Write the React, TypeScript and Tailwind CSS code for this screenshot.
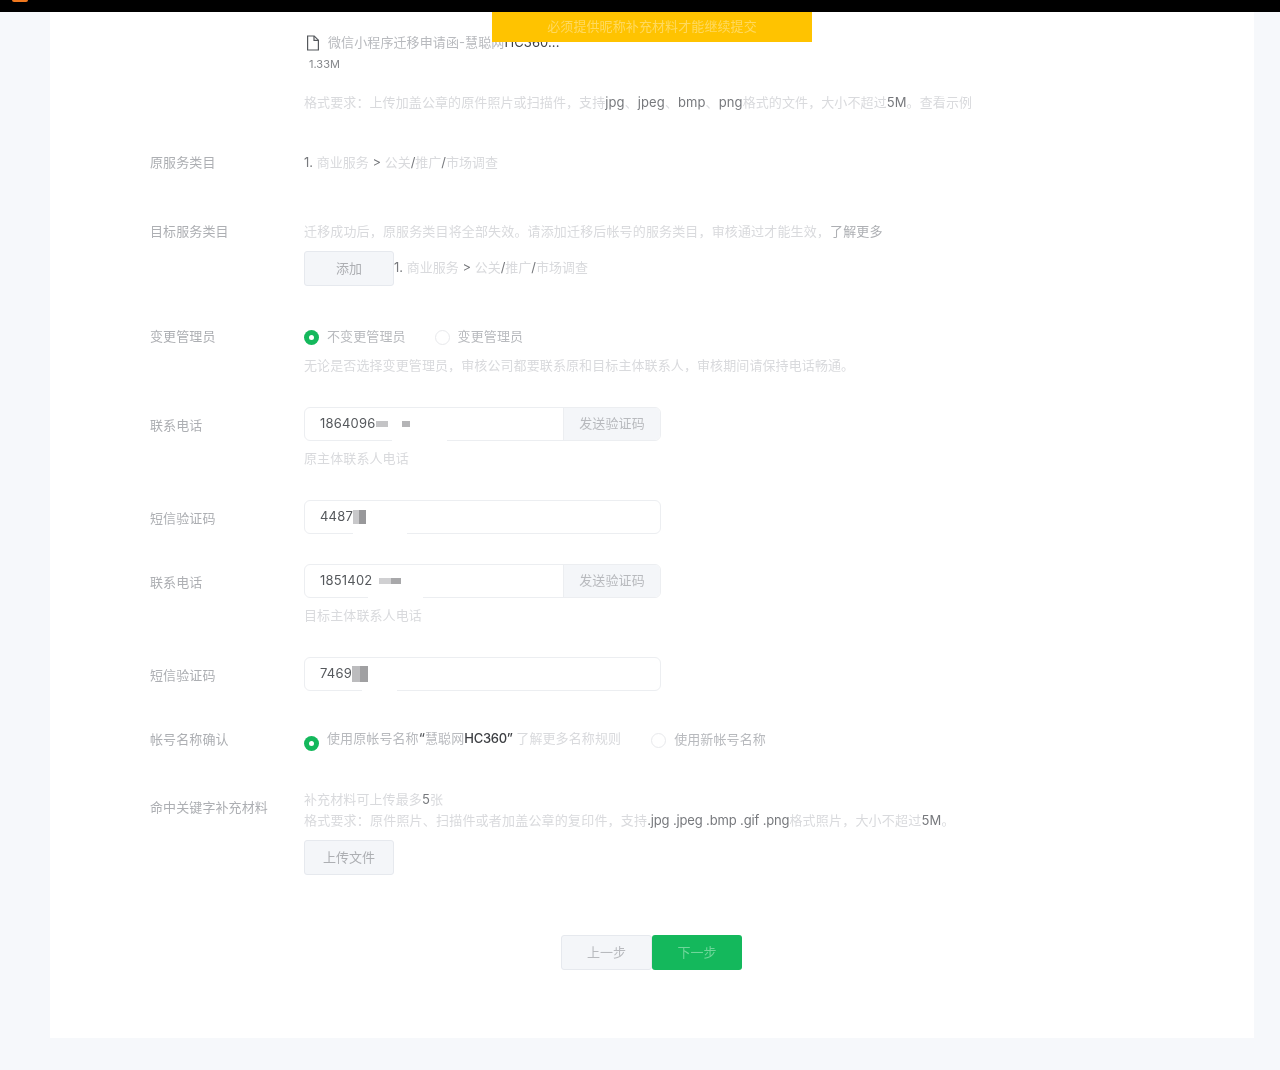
const font = { fontFamily: '"Inter","Noto Sans CJK SC",sans-serif' };

function Row({ label, className, labelClass, children }: { label: string; className: string; labelClass?: string; children: React.ReactNode }) {
  return (
    <div className={`flex ${className}`}>
      <div className={`w-[154px] shrink-0 text-[13px] leading-5 tracking-[0.1px] text-[#adafb3] ${labelClass ?? ""}`}>{label}</div>
      <div className="flex-1 min-w-0">{children}</div>
    </div>
  );
}

function Radio({ on }: { on?: boolean }) {
  return on ? (
    <span className="flex h-[15px] w-[15px] shrink-0 items-center justify-center rounded-full bg-[#14b85c]">
      <span className="h-[5px] w-[5px] rounded-full bg-white" />
    </span>
  ) : (
    <span className="block h-[15px] w-[15px] shrink-0 rounded-full border border-[#e8e9ec] bg-white" />
  );
}

function Mosaic({ cells }: { cells: string[] }) {
  return (
    <span className="inline-flex items-center">
      {cells.map((c, i) => (
        <span key={i} className={c} />
      ))}
    </span>
  );
}

function Field({ value, mosaic, send, patch }: { value: string; mosaic: React.ReactNode; send?: boolean; patch: string }) {
  return (
    <div className="relative w-[357px]">
      <div className="flex h-[34px] overflow-hidden rounded-[6px] border border-[#eceef1] bg-white">
        <div className="flex flex-1 items-center pl-[15px] text-[13px] tracking-[0.2px] text-[#55585c]">
          {value}
          {mosaic}
        </div>
        {send && (
          <div className="flex w-[97px] items-center justify-center border-l border-[#eceef1] bg-[#f4f6f9] text-[13px] tracking-[0.1px] text-[#b8babe]">
            发送验证码
          </div>
        )}
      </div>
      <div className={`absolute bottom-0 h-[2px] bg-white ${patch}`} />
    </div>
  );
}

const dark = "text-[#77797d]";

export default function App() {
  return (
    <div style={font} className="relative h-[1070px] overflow-hidden bg-[#f6f8fb] blur-[0.4px]">
      <div className="relative h-3 bg-black">
        <div className="absolute left-3 top-0 h-[2px] w-4 rounded-b-sm bg-[#f0781e]" />
      </div>
      <div className="absolute left-[492px] top-3 z-10 flex h-[30px] w-[320px] items-center justify-center bg-[#ffc300] text-[13px] tracking-[0.1px] text-[#ffd95f]">
        必须提供昵称补充材料才能继续提交
      </div>

      <div className="ml-[50px] h-[1026px] w-[1204px] bg-white pl-[100px] pt-[21px] text-[13px] text-[#d9dadd]">
        <div className="pl-[154px]">
          <div className="flex h-5 items-center">
            <svg width="14" height="16" viewBox="0 0 14 16" fill="none" stroke="#55585c" strokeWidth="1.2" className="ml-[2px] mr-[8px] shrink-0">
              <path d="M1.6 1h6.6l4.2 4.2V15H1.6z" />
              <path d="M8 1v4.4h4.4" />
            </svg>
            <span className="tracking-[0.1px] text-[#b8babe]">
              微信小程序迁移申请函-慧聪网<span className="text-[#3c3e42]">HC360...</span>
            </span>
          </div>
          <div className="mt-[3px] pl-[5px] text-[11px] leading-4 text-[#85878b]">1.33M</div>
          <div className="mt-[20px] h-5 leading-5 tracking-[0.1px]">
            格式要求：上传加盖公章的原件照片或扫描件，支持<span className={dark}>jpg</span>、<span className={dark}>jpeg</span>、<span className={dark}>bmp</span>、<span className={dark}>png</span>格式的文件，大小不超过<span className={dark}>5M</span>。查看示例
          </div>
        </div>

        <Row label="原服务类目" className="mt-[40px]">
          <div className="leading-5">
            <span className={dark}>1.</span> 商业服务 <span className={dark}>&gt;</span> 公关<span className={dark}>/</span>推广<span className={dark}>/</span>市场调查
          </div>
        </Row>

        <Row label="目标服务类目" className="mt-[49px]">
          <div className="leading-5 tracking-[0.15px]">
            迁移成功后，原服务类目将全部失效。请添加迁移后帐号的服务类目，审核通过才能生效，<span className="text-[#adafb3]">了解更多</span>
          </div>
          <div className="mt-[10px] flex items-start">
            <div className="flex h-[35px] w-[90px] items-center justify-center rounded-[3px] border border-[#e6e9ee] bg-[#f4f6f9] text-[#adafb3]">添加</div>
            <div className="pt-[6px] leading-5">
              <span className={dark}>1.</span> 商业服务 <span className={dark}>&gt;</span> 公关<span className={dark}>/</span>推广<span className={dark}>/</span>市场调查
            </div>
          </div>
        </Row>

        <Row label="变更管理员" className="mt-10">
          <div className="flex h-5 items-center pt-[2px] tracking-[0.1px] text-[#b8babe]">
            <Radio on />
            <span className="ml-[8px]">不变更管理员</span>
            <span className="ml-[29px]"><Radio /></span>
            <span className="ml-[8px]">变更管理员</span>
          </div>
          <div className="mt-[9px] leading-5 tracking-[0.1px]">无论是否选择变更管理员，审核公司都要联系原和目标主体联系人，审核期间请保持电话畅通。</div>
        </Row>

        <Row label="联系电话" className="mt-[32px]" labelClass="pt-[8px]">
          <Field
            value="1864096"
            send
            patch="left-[88px] w-[55px]"
            mosaic={
              <>
                <span className="h-[6px] w-[12px] bg-[#c4c4c6]" />
                <span className="ml-[14px] h-[6px] w-[8px] bg-[#b4b4b6]" />
              </>
            }
          />
          <div className="mt-[7px] leading-5 tracking-[0.1px]">原主体联系人电话</div>
        </Row>

        <Row label="短信验证码" className="mt-[32px]" labelClass="pt-[8px]">
          <Field value="4487" patch="left-[49px] w-[54px]" mosaic={<Mosaic cells={["h-[14px] w-[6px] bg-[#c8c8ca]", "h-[14px] w-[7px] bg-[#98989a]"]} />} />
        </Row>

        <Row label="联系电话" className="mt-[30px]" labelClass="pt-[8px]">
          <Field
            value="185140"
            send
            patch="left-[64px] w-[55px]"
            mosaic={
              <>
                <span className="text-[#55585c]">2</span>
                <span className="ml-[7px] h-[6px] w-[12px] bg-[#d0d0d2]" />
                <span className="h-[6px] w-[10px] bg-[#a8a8aa]" />
              </>
            }
          />
          <div className="mt-[7px] leading-5 tracking-[0.1px]">目标主体联系人电话</div>
        </Row>

        <Row label="短信验证码" className="mt-[32px]" labelClass="pt-[8px]">
          <Field value="7469" patch="left-[58px] w-[35px]" mosaic={<Mosaic cells={["h-[16px] w-[8px] bg-[#bcbcbe]", "h-[16px] w-[8px] bg-[#a0a0a2]"]} />} />
        </Row>

        <Row label="帐号名称确认" className="mt-[38px]">
          <div className="flex h-5 items-center tracking-[0.1px] text-[#b8babe]">
            <span className="mt-2"><Radio on /></span>
            <span className="ml-[8px]">
              使用原帐号名称<span className="font-medium text-[#55585c]">“</span>慧聪网<span className="font-medium tracking-[-0.3px] text-[#3c3e42]">HC360”</span> <span className="text-[#d9dadd]">了解更多名称规则</span>
            </span>
            <span className="ml-[30px] mt-[2px]"><Radio /></span>
            <span className="ml-[8px] mt-[2px]">使用新帐号名称</span>
          </div>
        </Row>

        <Row label="命中关键字补充材料" className="mt-[40px]" labelClass="pt-[8px]">
          <div className="leading-5 tracking-[0.1px]">补充材料可上传最多<span className={dark}>5</span>张</div>
          <div className="mt-[1px] leading-5 tracking-[0.2px]">
            格式要求：原件照片、扫描件或者加盖公章的复印件，支持<span className={`${dark} tracking-[-0.15px]`}>.jpg .jpeg .bmp .gif .png</span>格式照片，大小不超过<span className={dark}>5M</span>。
          </div>
          <div className="mt-[10px] flex h-[35px] w-[90px] items-center justify-center rounded-[3px] border border-[#e6e9ee] bg-[#f4f6f9] text-[#adafb3]">上传文件</div>
        </Row>

        <div className="ml-[411px] mt-[60px] flex">
          <div className="flex h-[35px] w-[91px] items-center justify-center rounded-[3px] border border-[#e6e9ee] bg-[#f4f6f9] text-[#b8babe]">上一步</div>
          <div className="flex h-[35px] w-[90px] items-center justify-center rounded-[3px] bg-[#14b85c] text-[#6fd69a]">下一步</div>
        </div>
      </div>
    </div>
  );
}
